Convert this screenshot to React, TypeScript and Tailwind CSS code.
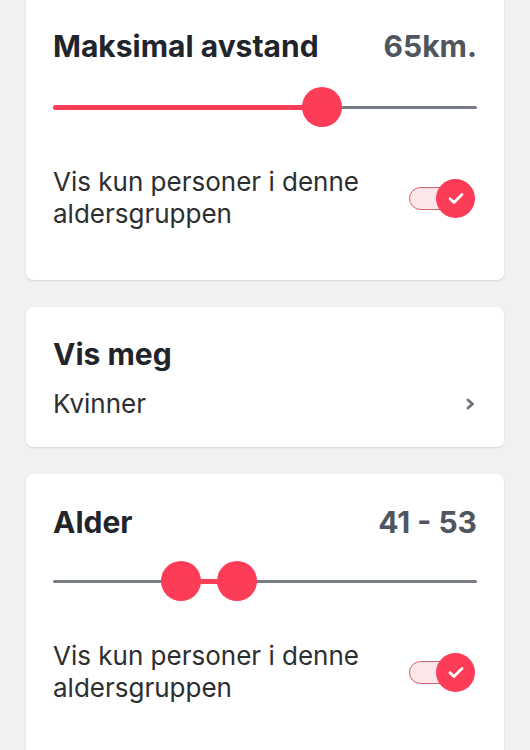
import React from 'react';

const RED = '#fd3c58';

function Toggle() {
  return (
    <div className="relative w-[66px] h-[39px] mr-[2px] shrink-0">
      <div className="absolute left-0 top-[8px] w-[48px] h-[23px] rounded-full bg-[#fde6e9] border-[1.5px] border-[#d5606f]" />
      <div className="absolute right-0 top-0 w-[39px] h-[39px] rounded-full bg-[#fd3c58] flex items-center justify-center">
        <svg width="16" height="13" viewBox="0 0 16 13" fill="none">
          <path d="M2 6.8 L6 10.5 L14 2.5" stroke="white" strokeWidth="2.8" strokeLinecap="round" strokeLinejoin="round" />
        </svg>
      </div>
    </div>
  );
}

function ToggleRow() {
  return (
    <div className="flex items-center justify-between mt-[39px]">
      <p className="text-[26px] leading-[32px] text-[#2d2e30]">
        Vis kun personer i denne
        <br />
        aldersgruppen
      </p>
      <Toggle />
    </div>
  );
}

function SingleSlider({ value }: { value: number }) {
  return (
    <div className="relative h-[40px] mt-[26px]">
      <div className="absolute left-0 right-0 top-[18.5px] h-[3px] rounded-full bg-[#787c84]" />
      <div className="absolute left-0 top-[17.5px] h-[5px] rounded-full" style={{ width: `${value}%`, background: RED }} />
      <div
        className="absolute top-0 w-[40px] h-[40px] -ml-[20px] rounded-full bg-[#fd3c58]"
        style={{ left: `${value}%` }}
      />
    </div>
  );
}

function RangeSlider({ from, to }: { from: number; to: number }) {
  return (
    <div className="relative h-[40px] mt-[24px]">
      <div className="absolute left-0 right-0 top-[18.5px] h-[3px] rounded-full bg-[#787c84]" />
      <div
        className="absolute top-[17.5px] h-[5px]"
        style={{ left: `${from}%`, width: `${to - from}%`, background: RED }}
      />
      <div className="absolute top-0 w-[40px] h-[40px] -ml-[20px] rounded-full bg-[#fd3c58]" style={{ left: `${from}%` }} />
      <div className="absolute top-0 w-[40px] h-[40px] -ml-[20px] rounded-full bg-[#fd3c58]" style={{ left: `${to}%` }} />
    </div>
  );
}

function Card({ children, className = '' }: { children: React.ReactNode; className?: string }) {
  return (
    <div className={`bg-white rounded-[7px] shadow-[0_1px_2px_rgba(0,0,0,0.12)] px-[27px] ${className}`}>
      {children}
    </div>
  );
}

export default function App() {
  return (
    <div
      className="min-h-[750px] h-[750px] overflow-hidden bg-[#f0f1f3] px-[26px] flex flex-col gap-[27px]"
      style={{ fontFamily: 'Inter, "Noto Sans", sans-serif' }}
    >
      <Card className="-mt-[2px] pt-[33px] pb-[50px] rounded-t-none shrink-0">
        <div className="flex items-baseline justify-between">
          <h2 className="text-[30px] leading-[30px] font-bold text-[#21252b]">Maksimal avstand</h2>
          <span className="text-[30px] leading-[30px] font-bold text-[#505660]">65km.</span>
        </div>
        <SingleSlider value={63.5} />
        <ToggleRow />
      </Card>

      <Card className="pt-[32px] pb-[27px] shrink-0">
        <h2 className="text-[30px] leading-[30px] font-bold text-[#21252b]">Vis meg</h2>
        <div className="flex items-center justify-between mt-[19px]">
          <span className="text-[26px] leading-[32px] text-[#2d2e30]">Kvinner</span>
          <svg width="10" height="14" viewBox="0 0 10 14" fill="none" className="mr-[2px]">
            <path d="M3 3 L7.5 7 L3 11" stroke="#6f737b" strokeWidth="3" strokeLinecap="round" strokeLinejoin="round" />
          </svg>
        </div>
      </Card>

      <Card className="pt-[33px] pb-[60px] shrink-0">
        <div className="flex items-baseline justify-between">
          <h2 className="text-[30px] leading-[30px] font-bold text-[#21252b]">Alder</h2>
          <span className="text-[30px] leading-[30px] font-bold text-[#505660]">41 - 53</span>
        </div>
        <RangeSlider from={30.3} to={43.5} />
        <ToggleRow />
      </Card>
    </div>
  );
}
